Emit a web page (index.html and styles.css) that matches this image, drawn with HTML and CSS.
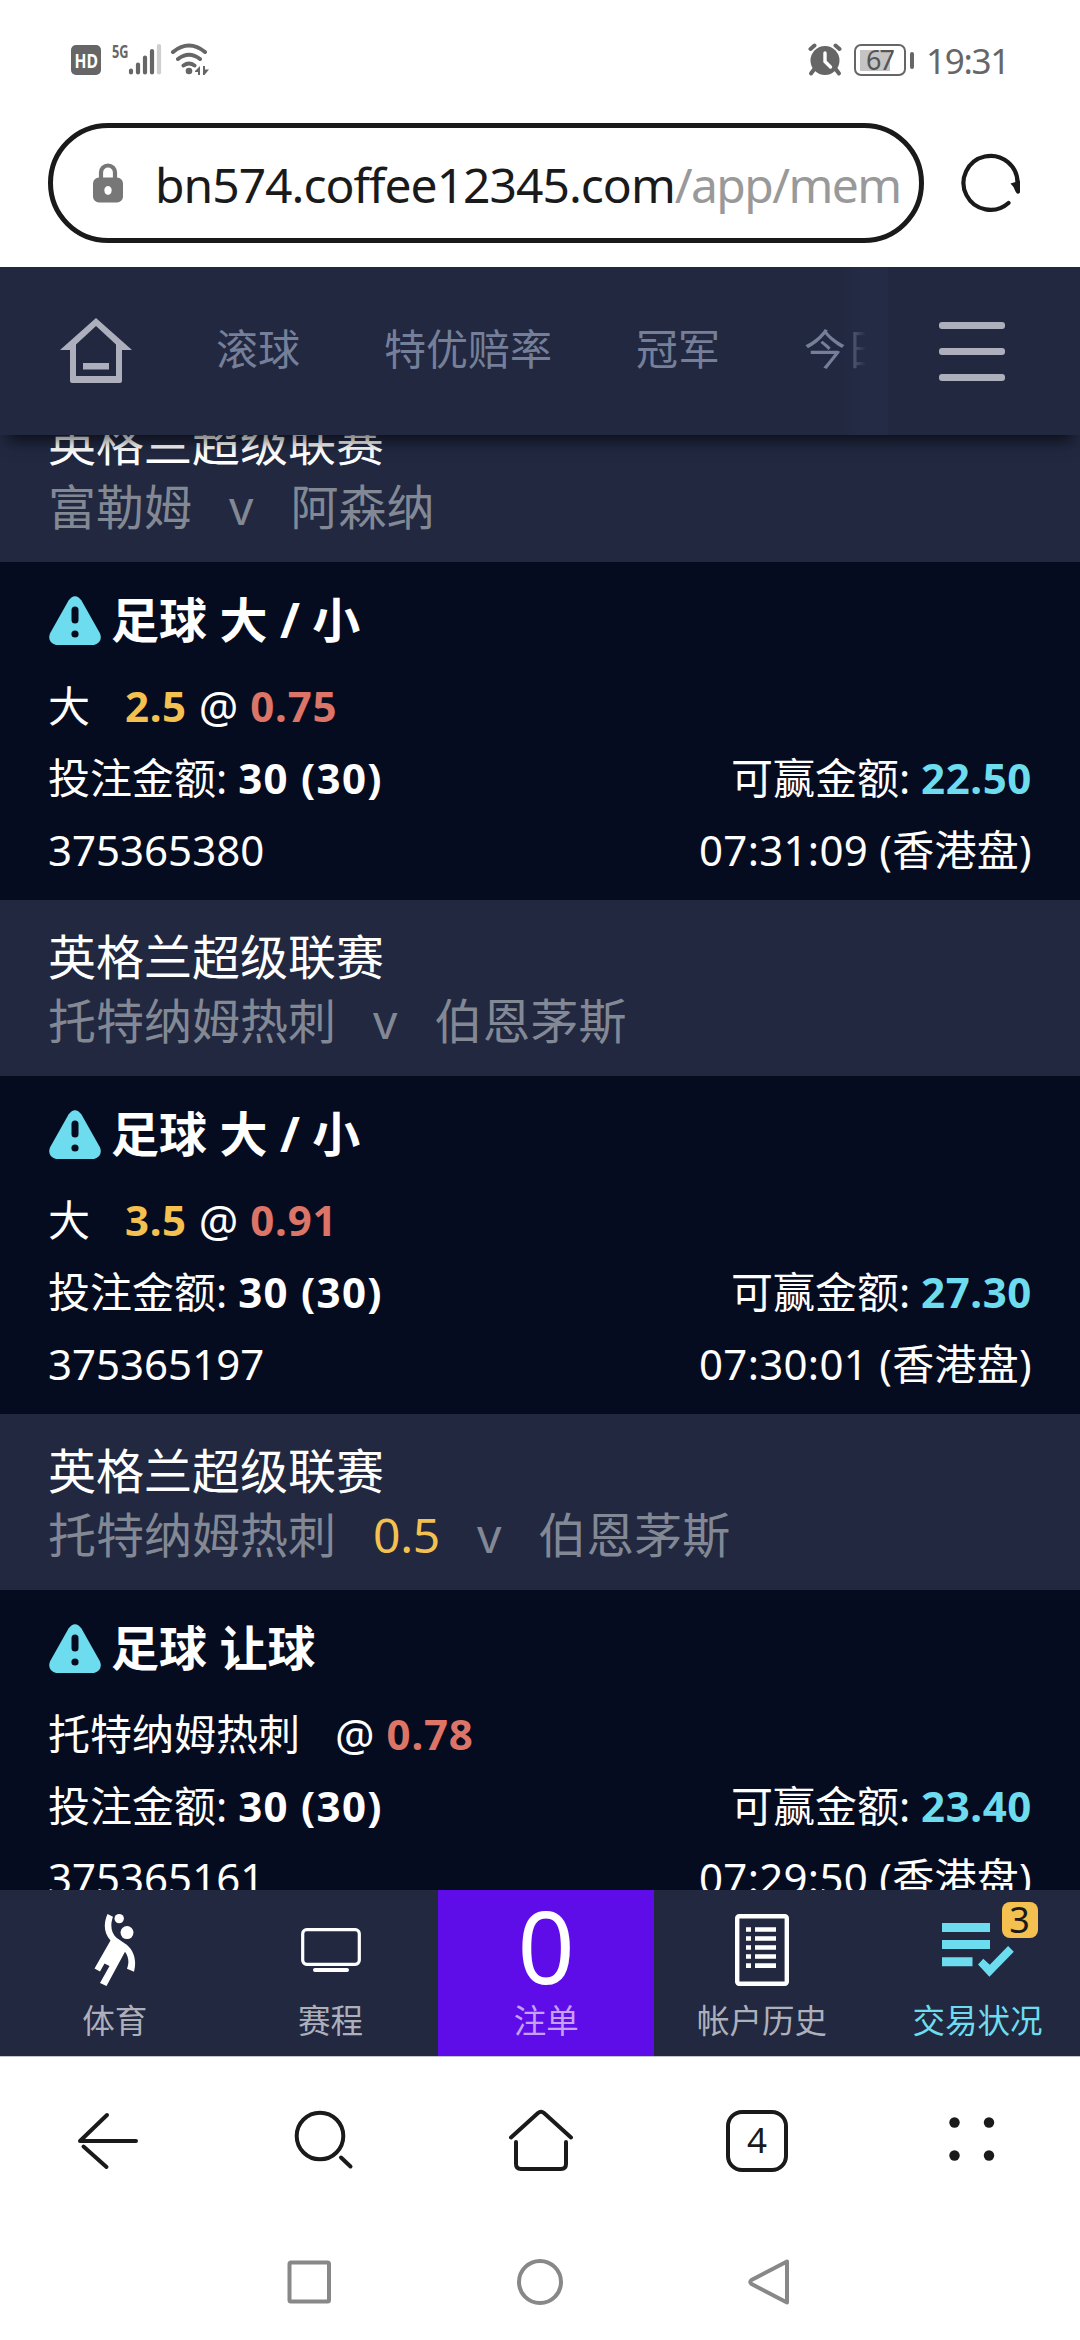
FILE: index.html
```html
<!DOCTYPE html>
<html lang="zh-CN">
<head>
<meta charset="utf-8">
<title>交易状况</title>
<link rel="stylesheet" href="styles.css">
</head>
<body>
<div class="phone">
  <div class="status">
    <svg class="status-signals" width="140" height="36" viewBox="70 42 140 36">
      <rect x="71" y="45" width="30" height="30" rx="5" fill="#666"/>
      <text x="74.500" y="67.500" class="hd" textLength="23.500" lengthAdjust="spacingAndGlyphs">HD</text>
      <text x="112" y="57.500" class="net" textLength="16.500" lengthAdjust="spacingAndGlyphs">5G</text>
      <g stroke="#666" stroke-width="4.200" stroke-linecap="round">
        <path d="M131 70.500v2M138 64.500v8M145 57.500v15M152 51v21.500"/>
        <path d="M159 46v26.500" stroke="#cfcfcf"/>
      </g>
      <g fill="none" stroke="#666" stroke-width="4" stroke-linecap="round">
        <path d="M173 52q16-13 32 0M178 59q11-8.500 22 0M183.500 65.500q5.500-4 11 0"/>
      </g>
      <circle cx="189" cy="71" r="3.300" fill="#666"/>
      <path d="M200 66v9h-2v-3h-3v-1zM203 66v9h1.500l4.500-5.500h-4v-3.500z" fill="#666"/>
    </svg>
    <div class="status-right">
      <svg width="34" height="34" viewBox="807 43 34 34">
        <path d="M813 69.500l-3 4M835 69.500l3 4" stroke="#666" stroke-width="4" stroke-linecap="round"/>
        <circle cx="824" cy="60.500" r="14.500" fill="#666"/>
        <path d="M809.500 49l4-3.500M838.500 49l-4-3.500" stroke="#666" stroke-width="4" stroke-linecap="round"/>
        <path d="M824 53v8.500l5.500 5.500" fill="none" stroke="#fff" stroke-width="3.400" stroke-linecap="round"/>
      </svg>
      <div class="battery"><span class="battery-body"><span class="battery-level">67</span></span><span class="battery-tip"></span></div>
      <span class="clock">19:31</span>
    </div>
  </div>

  <div class="address">
    <div class="url-box">
      <svg width="30" height="40" viewBox="0 0 30 40">
        <path d="M8 18V9.500a7 7 0 0 1 14 0V18" fill="none" stroke="#777" stroke-width="4.200"/>
        <path d="M6 14.500h18a6 6 0 0 1 6 6v13a6 6 0 0 1-6 6H6a6 6 0 0 1-6-6v-13a6 6 0 0 1 6-6zM15 23a3.800 4.400 0 1 0 .01 0z" fill="#777" fill-rule="evenodd"/>
      </svg>
      <div class="url"><span class="host">bn574.coffee12345.com</span><span class="path">/app/mem</span></div>
    </div>
    <svg class="reload" width="62" height="62" viewBox="0 0 62 62">
      <path d="M48.500 51A27 27 0 1 1 57.500 32" fill="none" stroke="#1a1a1a" stroke-width="4.200" stroke-linecap="round"/>
      <path d="M50.500 31.500l9.500-3v12q-2.500 3-4.500-1l-2-4.500z" fill="#1a1a1a"/>
    </svg>
  </div>

  <div class="app">
    <header class="top">
      <svg class="home" width="72" height="66" viewBox="0 0 72 66">
        <path d="M36 0L72 32H62V63q0 2-2 2H12q-2 0-2-2V32H0zM36 8L16 26.500V58H56V26.500z" fill="#adb0bc" fill-rule="evenodd"/>
        <path d="M23 45h26v6.500H23z" fill="#adb0bc"/>
      </svg>
      <nav class="tabs"><span>滚球</span><span>特优赔率</span><span>冠军</span><span>今日</span></nav>
      <div class="menu"><i></i><i></i><i></i></div>
    </header>

    <main class="list">
      <div class="scroll">
        <section>
          <div class="match">
            <div class="league">英格兰超级联赛</div>
            <div class="teams"><span>富勒姆</span><span>v</span><span>阿森纳</span></div>
          </div>
          <div class="bet">
            <div class="title"><svg class="warn" width="52" height="49" viewBox="0 0 52 49"><path d="M19.500 4.500Q26-4 32.500 4.500L51 37.500Q54 46 45 49H7Q-2 46 1 37.500z" fill="#6edcef"/><rect x="22.500" y="10.500" width="7" height="17" rx="3.500" fill="#060c1f"/><circle cx="26" cy="38" r="3.600" fill="#060c1f"/></svg>足球 大 / 小</div>
            <div class="row"><div class="pick"><span>大</span><b class="line">2.5</b><span class="at">@</span><b class="odds">0.75</b></div></div>
            <div class="row"><span>投注金额: <b class="stake">30 (30)</b></span><span>可赢金额: <b class="win">22.50</b></span></div>
            <div class="row"><span>375365380</span><span class="time">07:31:09 (香港盘)</span></div>
          </div>
        </section>
        <section>
          <div class="match">
            <div class="league">英格兰超级联赛</div>
            <div class="teams"><span>托特纳姆热刺</span><span>v</span><span>伯恩茅斯</span></div>
          </div>
          <div class="bet">
            <div class="title"><svg class="warn" width="52" height="49" viewBox="0 0 52 49"><path d="M19.500 4.500Q26-4 32.500 4.500L51 37.500Q54 46 45 49H7Q-2 46 1 37.500z" fill="#6edcef"/><rect x="22.500" y="10.500" width="7" height="17" rx="3.500" fill="#060c1f"/><circle cx="26" cy="38" r="3.600" fill="#060c1f"/></svg>足球 大 / 小</div>
            <div class="row"><div class="pick"><span>大</span><b class="line">3.5</b><span class="at">@</span><b class="odds">0.91</b></div></div>
            <div class="row"><span>投注金额: <b class="stake">30 (30)</b></span><span>可赢金额: <b class="win">27.30</b></span></div>
            <div class="row"><span>375365197</span><span class="time">07:30:01 (香港盘)</span></div>
          </div>
        </section>
        <section>
          <div class="match">
            <div class="league">英格兰超级联赛</div>
            <div class="teams"><span>托特纳姆热刺</span><span class="handicap">0.5</span><span>v</span><span>伯恩茅斯</span></div>
          </div>
          <div class="bet">
            <div class="title"><svg class="warn" width="52" height="49" viewBox="0 0 52 49"><path d="M19.500 4.500Q26-4 32.500 4.500L51 37.500Q54 46 45 49H7Q-2 46 1 37.500z" fill="#6edcef"/><rect x="22.500" y="10.500" width="7" height="17" rx="3.500" fill="#060c1f"/><circle cx="26" cy="38" r="3.600" fill="#060c1f"/></svg>足球 让球</div>
            <div class="row"><div class="pick"><span class="team">托特纳姆热刺</span><span class="at">@</span><b class="odds">0.78</b></div></div>
            <div class="row"><span>投注金额: <b class="stake">30 (30)</b></span><span>可赢金额: <b class="win">23.40</b></span></div>
            <div class="row"><span>375365161</span><span class="time">07:29:50 (香港盘)</span></div>
          </div>
        </section>
      </div>
    </main>

    <nav class="dock">
      <div class="dock-item">
        <div class="dock-icon"><svg width="42" height="76" viewBox="94 1912 42 76">
          <circle cx="119.200" cy="1918.600" r="4.700" fill="#fff"/>
          <circle cx="127" cy="1932.600" r="6.500" fill="#fff"/>
          <path d="M107.500 1914l5.500 2.800c-3 8-2 16 3.500 21l8 5.500c8 5 13 15 9.500 28.500l-7-3c2.500-7 1.500-12-2-17L106.500 1986l-6.500-3 9.500-17-5-2.500-4.500 8-5.500-3 16-28c-7-8-7-17-3-26.500z" fill="#fff"/>
        </svg></div><span>体育</span>
      </div>
      <div class="dock-item">
        <div class="dock-icon"><svg width="62" height="76" viewBox="300 1912 62 76">
          <rect x="302.700" y="1929.700" width="56.600" height="34.600" rx="4" fill="none" stroke="#fff" stroke-width="3.200"/>
          <rect x="313" y="1968" width="36" height="4" rx="2" fill="#fff"/>
        </svg></div><span>赛程</span>
      </div>
      <div class="dock-item slip"><div class="dock-icon count">0</div><span>注单</span></div>
      <div class="dock-item">
        <div class="dock-icon"><svg width="54" height="76" viewBox="734 1912 54 76">
          <rect x="736.200" y="1916.200" width="49.600" height="67.600" rx="2" fill="none" stroke="#fff" stroke-width="4.400"/>
          <path d="M745 1929.500h5m4 0h21M745 1938.500h5m4 0h21M745 1947.500h5m4 0h21M745 1956.500h5m4 0h21M745 1965.700h5m4 0h21" stroke="#fff" stroke-width="4.700"/>
        </svg></div><span>帐户历史</span>
      </div>
      <div class="dock-item active">
        <div class="dock-icon"><svg width="74" height="76" viewBox="940 1912 74 76">
          <path d="M941 1923h48v9h-48zM941 1940h48v9h-48zM941 1957.300h30.500v9H941zM977 1964.500l5.300-5.800 6.500 6 18.300-18.700 5.700 5.700-24.400 25z" fill="#6edcef"/>
        </svg><em class="badge">3</em></div><span>交易状况</span>
      </div>
    </nav>
  </div>

  <div class="browser-bar">
    <svg width="64" height="64" viewBox="76 2109 64 64"><path d="M136 2141H80l27-26M83.500 2146.500l23 20.500" fill="none" stroke="#1a1a1a" stroke-width="4" stroke-linecap="round" stroke-linejoin="round"/></svg>
    <svg width="64" height="64" viewBox="291 2109 64 64"><g fill="none" stroke="#1a1a1a" stroke-width="4" stroke-linecap="round"><circle cx="319" cy="2136" r="23.300"/><path d="M340 2157.500l9.500 9"/></g></svg>
    <svg width="66" height="64" viewBox="507 2109 66 64"><g fill="none" stroke="#1a1a1a" stroke-width="4" stroke-linecap="round" stroke-linejoin="round"><path d="M510 2137.500l27-24.500q3-2.500 6 0l27 24.500M515 2142v22q0 5 5 5h40q5 0 5-5v-22"/></g></svg>
    <div class="tab-count">4</div>
    <svg width="64" height="64" viewBox="940 2109 64 64"><g fill="#1a1a1a"><circle cx="954.500" cy="2122.500" r="5.200"/><circle cx="989" cy="2122.500" r="5.200"/><circle cx="954.500" cy="2155.500" r="5.200"/><circle cx="989" cy="2155.500" r="5.200"/></g></svg>
  </div>

  <div class="system-bar">
    <svg width="50" height="50" viewBox="0 0 50 50"><rect x="5.500" y="5.500" width="39.500" height="39" rx="1.500" fill="none" stroke="#888" stroke-width="4"/></svg>
    <svg width="50" height="50" viewBox="0 0 50 50"><circle cx="25" cy="25" r="21" fill="none" stroke="#888" stroke-width="4"/></svg>
    <svg width="50" height="50" viewBox="0 0 50 50"><path d="M42 4.500v41L6.500 27q-2.500-2 0-4z" fill="none" stroke="#888" stroke-width="4" stroke-linejoin="round"/></svg>
  </div>
</div>
</body>
</html>
```
FILE: styles.css
```css
* { box-sizing: border-box; }
body {
  margin: 0;
  background: #fff;
  font-family: "Noto Sans", "Noto Sans CJK SC", sans-serif;
}
svg { display: block; flex: none; }
.phone {
  width: 1080px;
  height: 2340px;
  display: flex;
  flex-direction: column;
  overflow: hidden;
  background: #fff;
}

/* phone status bar */
.status {
  height: 120px;
  padding: 0 72px 0 70px;
  display: flex;
  align-items: center;
  justify-content: space-between;
  color: #666;
}
.hd { font: 700 19px "Open Sans", sans-serif; fill: #fff; }
.net { font: 700 18px "Open Sans", sans-serif; fill: #666; }
.status-right { display: flex; align-items: center; gap: 12px; }
.battery { display: flex; align-items: center; gap: 4px; }
.battery-body {
  width: 52px;
  height: 32px;
  padding: 4px;
  border: 2.500px solid #666;
  border-radius: 7px;
}
.battery-level {
  display: block;
  width: 30px;
  height: 21px;
  background: #c4c4c4;
  font-size: 27px;
  line-height: 20px;
  text-indent: 6px;
  letter-spacing: -2px;
  color: #555;
}
.battery-tip { width: 4px; height: 17px; border-radius: 2px; background: #666; }
.clock { font-size: 35px; letter-spacing: -1.300px; line-height: 42px; width: 82px; padding-top: 1px; }

/* address bar */
.address {
  height: 147px;
  padding: 3px 58px 24px 48px;
  display: flex;
  align-items: center;
  justify-content: space-between;
}
.url-box {
  width: 876px;
  height: 120px;
  padding-left: 40px;
  border: 5px solid #1a1a1a;
  border-radius: 60px;
  display: flex;
  align-items: center;
  gap: 32px;
}
.url { font-size: 48px; line-height: 60px; white-space: nowrap; padding-top: 4px; }
.host { color: #1a1a1a; letter-spacing: -1px; }
.path { color: #999; letter-spacing: -1.600px; }

/* betting page */
.app { height: 1790px; display: flex; flex-direction: column; border-bottom: 1px solid #c4c5ca; }
.top {
  height: 168px;
  flex: none;
  position: relative;
  z-index: 1;
  display: flex;
  align-items: center;
  background: #212840;
  box-shadow: 0 14px 14px -8px rgba(0, 0, 0, .6);
}
.home { margin: 0 0 0 60px; }
.tabs {
  width: 756px;
  height: 168px;
  padding-left: 84px;
  display: flex;
  gap: 84px;
  overflow: hidden;
  white-space: nowrap;
  font-size: 42px;
  line-height: 164px;
  color: #757f99;
  background: linear-gradient(90deg, transparent 710px, #242b45 730px);
}
.tabs span { flex: none; }
.tabs span:last-child {
  width: 84px;
  color: transparent;
  background: linear-gradient(90deg, #757f99 38px, rgba(117, 127, 153, 0) 62px);
  -webkit-background-clip: text;
  background-clip: text;
}
.menu { margin-left: 51px; display: flex; flex-direction: column; gap: 19px; }
.menu i { width: 66px; height: 7px; border-radius: 3px; background: #adb0bc; }

.list { flex: 1; min-height: 0; overflow: hidden; background: #060c1f; }
.scroll { margin-top: -49px; }
.match {
  height: 176px;
  padding: 25px 48px 0;
  background: #212840;
  font-size: 48px;
  line-height: 64px;
}
.league { color: #fff; }
.teams { display: flex; gap: 37px; color: #838895; }
.handicap { color: #f4c150; letter-spacing: -.300px; }
.bet {
  height: 338px;
  padding: 8px 48px 0;
  color: #fff;
  font-size: 42px;
  line-height: 72px;
}
.title {
  display: flex;
  align-items: center;
  gap: 10px;
  height: 100px;
  font-size: 48px;
  font-weight: 700;
  line-height: 100px;
}
.warn { margin-left: 1px; }
.row { display: flex; justify-content: space-between; height: 72px; white-space: nowrap; }
.pick { display: flex; gap: 12px; }
.team { margin-right: 23px; }
.line { margin-left: 23px; color: #f4c150; letter-spacing: .600px; }
.at { font-size: 44px; }
.odds { color: #dc7468; letter-spacing: .800px; }
.win { color: #6edcef; letter-spacing: .600px; }
.stake { letter-spacing: 1.300px; }
.time { letter-spacing: .300px; }

/* tab dock */
.dock { height: 166px; flex: none; display: flex; padding-left: 7px; background: #212840; }
.dock-item {
  width: 215.700px;
  flex: none;
  display: flex;
  flex-direction: column;
  align-items: center;
  color: #adb0bb;
  font-size: 32.500px;
  line-height: 46px;
}
.dock-icon { position: relative; height: 108px; padding-top: 22px; }
.slip { background: #5e0de9; color: #c6a0f7; }
.count { padding: 0; font-size: 100px; line-height: 111px; color: #fff; }
.active { color: #6edcef; }
.badge {
  position: absolute;
  left: 61px;
  top: 12px;
  width: 36px;
  height: 36px;
  border-radius: 8px;
  background: #f4c150;
  color: #1a1a1a;
  font-style: normal;
  font-size: 36px;
  line-height: 35px;
  text-align: center;
}

/* browser toolbar */
.browser-bar {
  height: 168px;
  padding: 0 76px;
  display: flex;
  align-items: center;
  justify-content: space-between;
}
.tab-count {
  width: 62px;
  height: 62px;
  border: 4px solid #1a1a1a;
  border-radius: 16px;
  font-size: 35px;
  line-height: 52px;
  text-align: center;
  color: #1a1a1a;
}

/* system navigation */
.system-bar {
  height: 113px;
  padding: 0 285px 0 284px;
  display: flex;
  align-items: center;
  justify-content: space-between;
}
```
